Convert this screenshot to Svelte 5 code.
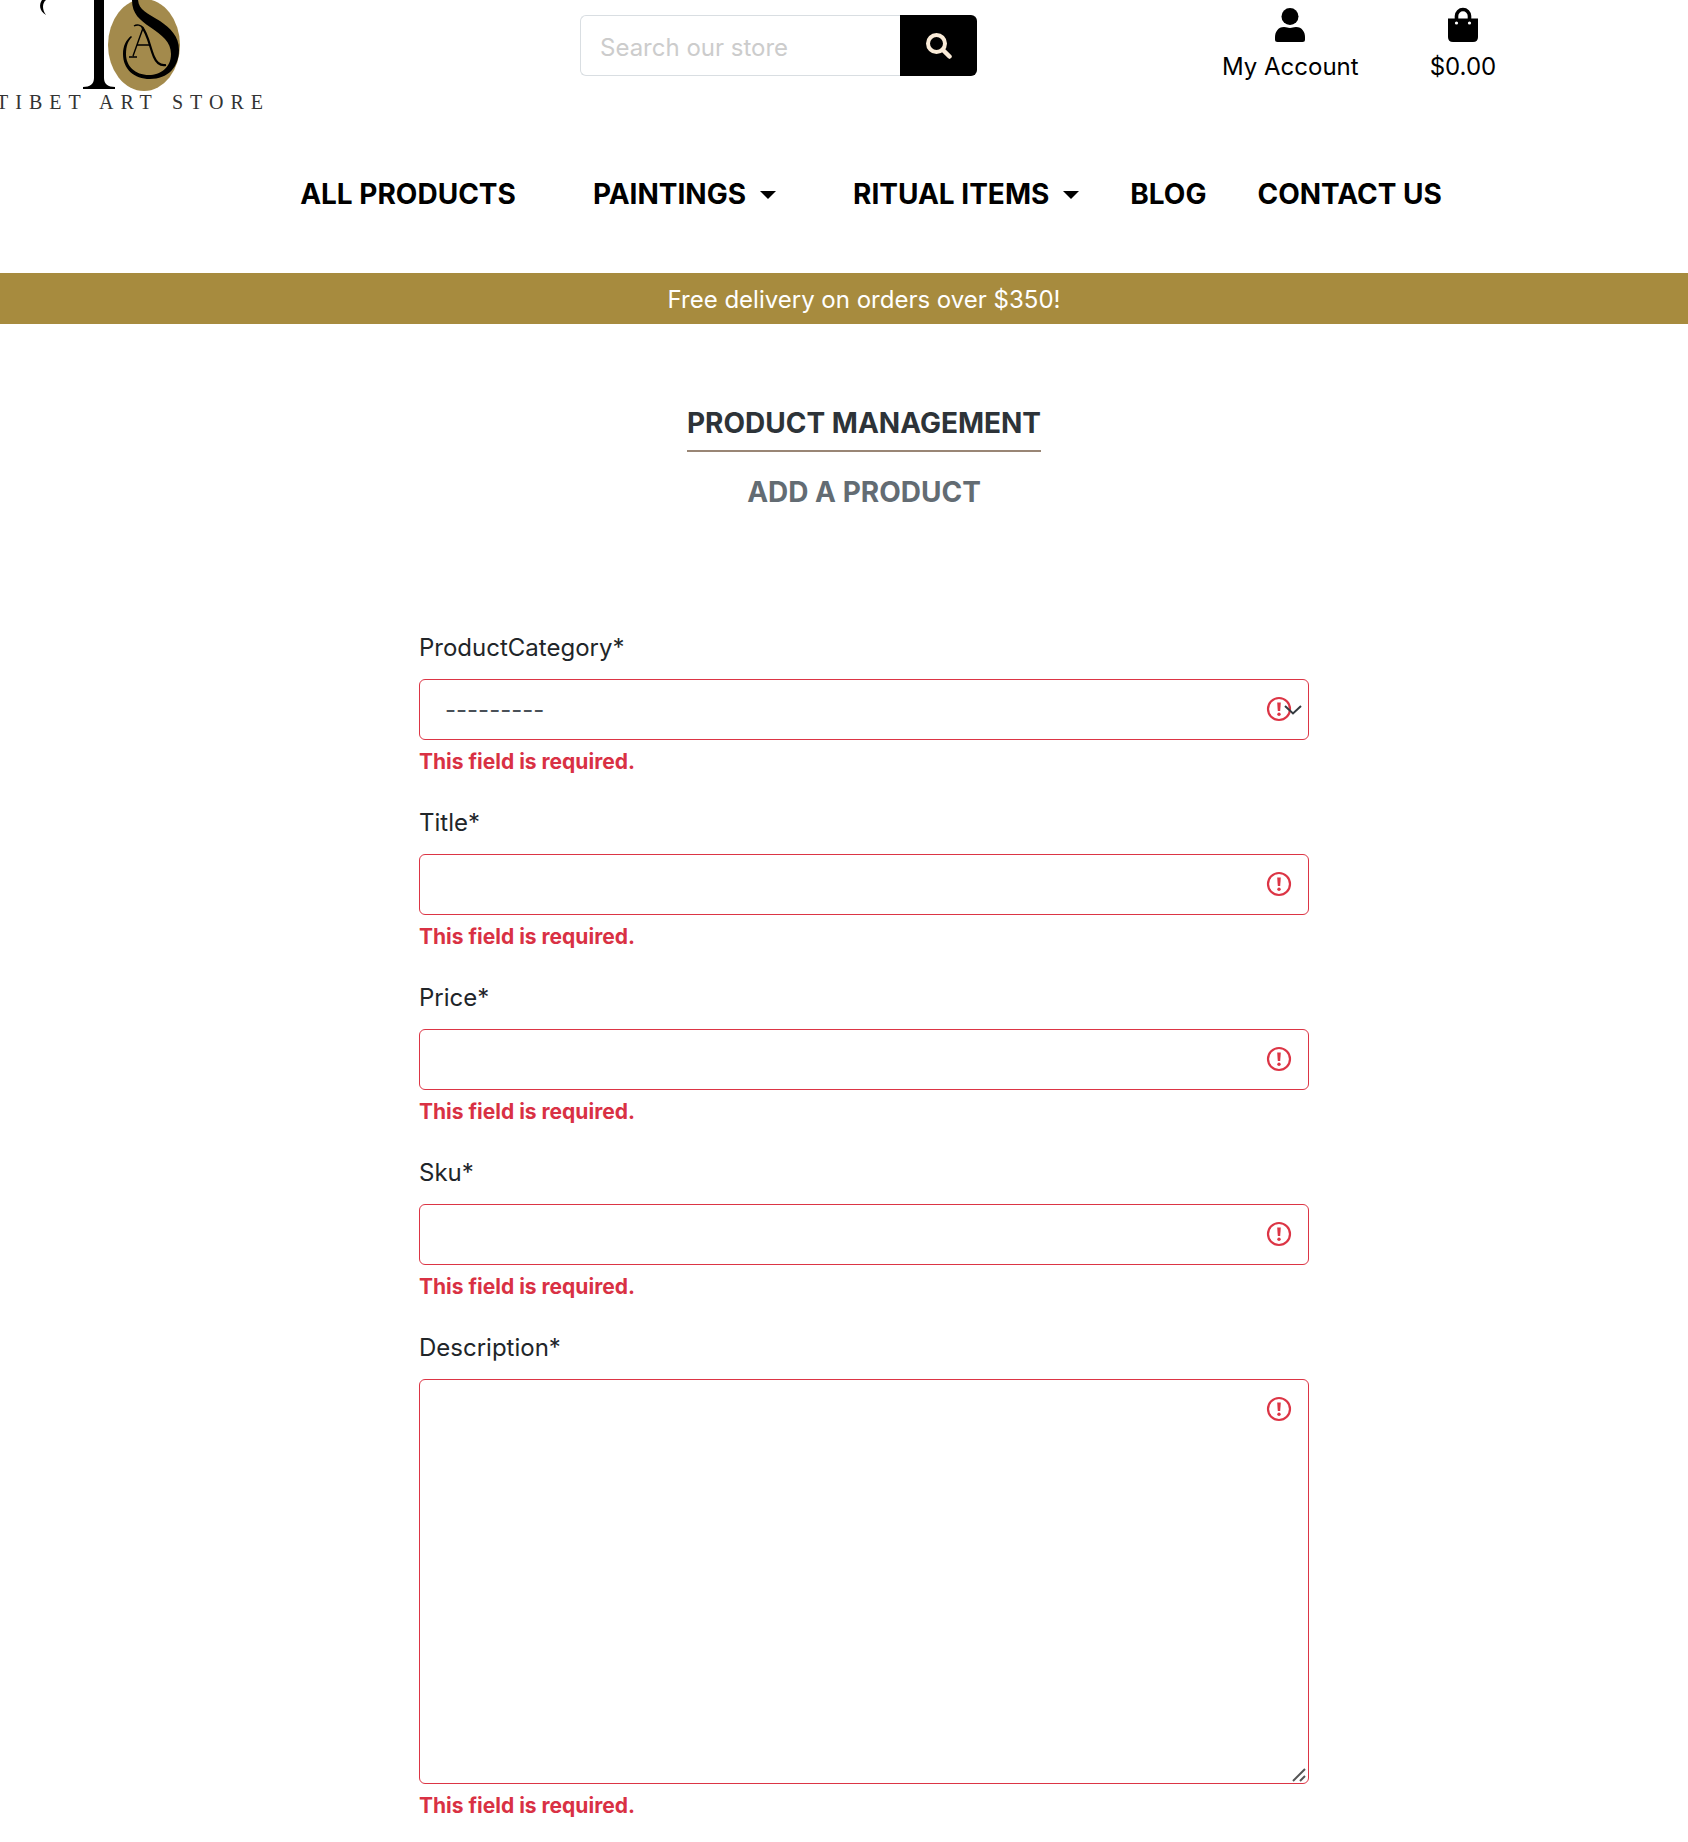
<script>
  const links = [
    { label: 'ALL PRODUCTS', menu: false, wide: true },
    { label: 'PAINTINGS', menu: true, wide: true },
    { label: 'RITUAL ITEMS', menu: true, wide: false },
    { label: 'BLOG', menu: false, wide: false },
    { label: 'CONTACT US', menu: false, wide: false }
  ];

  const fields = [
    { id: 'category', label: 'ProductCategory*', kind: 'select' },
    { id: 'title', label: 'Title*', kind: 'text' },
    { id: 'price', label: 'Price*', kind: 'text' },
    { id: 'sku', label: 'Sku*', kind: 'text' },
    { id: 'description', label: 'Description*', kind: 'area' }
  ];
</script>

<header>
  <div class="top">
    <a class="logo" href="/" aria-label="Tibet Art Store">
      <svg width="280" height="120" viewBox="0 0 280 120">
        <ellipse cx="144" cy="45" rx="36" ry="46" fill="#a38a4c" />
        <path d="M46 0C42 3 42 10 46 15C39 11 39 4 42 0Z" />
        <path d="M94 0H104V78C104 84 108 87 115 87V89H83V87C90 87 94 84 94 78Z" />
        <path d="M132 0C132 14 140 20 150 27C162 35 171 42 171 54C171 68 160 75 149 75C135 75 126 66 126 54C126 46 128 41 132 37L131 36C126 40 123 46 123 54C123 69 134 79 150 79C168 79 179 67 179 50C179 36 170 28 160 21C147 13 139 10 138 0Z" />
        <g fill="none" stroke="#000">
          <path d="M134 26C137 24 141 25 143 28L133 56M129 57H137M137 45H150" stroke-width="1.4" />
          <path d="M142 27C148 34 150 48 154 57C157 64 161 66 166 65" stroke-width="2.2" />
        </g>
        <g class="wordmark">
          <text x="-4" y="109">TIBET</text>
          <text x="99" y="109">ART</text>
          <text x="172" y="109">STORE</text>
        </g>
      </svg>
    </a>

    <form class="search" role="search">
      <input type="search" placeholder="Search our store" aria-label="Search our store" />
      <button type="button" aria-label="Search">
        <svg width="26" height="26" viewBox="0 0 26 26" fill="none" stroke="#faebd7">
          <circle cx="10.5" cy="10.5" r="8.5" stroke-width="4" />
          <path d="M17 17L23.500 23.500" stroke-width="4.500" stroke-linecap="round" />
        </svg>
      </button>
    </form>

    <div class="account">
      <a href="/account">
        <svg width="32" height="36" viewBox="0 0 32 36">
          <circle cx="16" cy="9.500" r="8.500" />
          <path d="M10 20C13 20 13.500 21 16 21S19 20 22 20C28 20 31 25 31 30V32.500Q31 35 28.500 35H3.500Q1 35 1 32.500V30C1 25 4 20 10 20Z" />
        </svg>
        <span>My Account</span>
      </a>
      <a href="/bag">
        <svg width="32" height="36" viewBox="0 0 32 36">
          <path d="M1 11.500H31V30Q31 35 26 35H6Q1 35 1 30Z" />
          <path d="M9.500 13V9A6.500 6.500 0 0 1 22.500 9V13" fill="none" stroke="#000" stroke-width="3.600" />
          <circle cx="9.500" cy="16" r="1.600" fill="#fff" />
          <circle cx="22.500" cy="16" r="1.600" fill="#fff" />
        </svg>
        <span>$0.00</span>
      </a>
    </div>
  </div>

  <nav>
    {#each links as link}
      <a href="/products" class:wide={link.wide}>
        {link.label}
        {#if link.menu}<span class="caret"></span>{/if}
      </a>
    {/each}
  </nav>
</header>

<div class="banner">Free delivery on orders over $350!</div>

<main>
  <h1>PRODUCT MANAGEMENT</h1>
  <h2>ADD A PRODUCT</h2>

  <form class="product" novalidate>
    {#each fields as field}
      <div class="field">
        <label for={field.id}>{field.label}</label>
        <div class="control">
          {#if field.kind === 'select'}
            <select id={field.id} aria-invalid="true">
              <option>---------</option>
            </select>
          {:else if field.kind === 'area'}
            <textarea id={field.id} aria-invalid="true"></textarea>
            <svg class="grip" width="14" height="14" viewBox="0 0 14 14">
              <path d="M1 13L13 1M8 13L13 8" stroke="#555" stroke-width="2" />
            </svg>
          {:else}
            <input id={field.id} type="text" aria-invalid="true" />
          {/if}
          <svg class="alert" width="26" height="26" viewBox="0 0 26 26">
            <circle cx="13" cy="13" r="11" fill="none" stroke="#dc3545" stroke-width="2.200" />
            <path d="M11.200 6.500H14.800L14.200 15H11.800Z" fill="#dc3545" />
            <circle cx="13" cy="18.200" r="1.700" fill="#dc3545" />
          </svg>
          {#if field.kind === 'select'}
            <svg class="chevron" width="18" height="10" viewBox="0 0 18 10">
              <path d="M1 1L9 8.500L17 1" fill="none" stroke="#343a40" stroke-width="2" />
            </svg>
          {/if}
        </div>
        <p>This field is required.</p>
      </div>
    {/each}
  </form>
</main>

<style>
  :global(body) {
    background: #fff;
    color: #212529;
    font-family: Inter, 'Liberation Sans', sans-serif;
    font-size: 24px;
    line-height: 39px;
    overflow-x: hidden;
  }

  a {
    color: #000;
    text-decoration: none;
  }

  .top {
    display: grid;
    grid-template-columns: minmax(0, 580fr) minmax(0, 397fr) minmax(0, 711fr);
    align-items: start;
    height: 120px;
  }

  .logo svg {
    display: block;
  }

  .wordmark {
    fill: #333;
    font-family: 'Liberation Serif', serif;
    font-size: 20px;
    letter-spacing: 7px;
  }

  .search {
    display: flex;
    height: 61px;
    margin-top: 15px;
  }

  .search input {
    flex: 1;
    min-width: 0;
    box-sizing: border-box;
    padding: 3px 19px 0;
    border: 1px solid #d9dee2;
    border-right: 0;
    border-radius: 6px 0 0 6px;
    background: #fff;
    font: inherit;
  }

  .search input::placeholder {
    color: #ccc;
  }

  .search button {
    display: flex;
    align-items: center;
    justify-content: center;
    width: 77px;
    padding: 0;
    border: 0;
    border-radius: 0 6px 6px 0;
    background: #000;
  }

  .account {
    display: flex;
    gap: 71px;
    padding: 7px 0 0 245px;
  }

  .account a {
    display: flex;
    flex-direction: column;
    align-items: center;
    gap: 4px;
    white-space: nowrap;
  }

  nav {
    display: flex;
    align-items: center;
    justify-content: center;
    gap: 51px;
    height: 153px;
    padding: 0 0 4px 54px;
    box-sizing: border-box;
    font-size: 28px;
    font-weight: 700;
    white-space: nowrap;
  }

  nav a {
    display: flex;
    align-items: center;
    gap: 14px;
  }

  nav .wide {
    margin-right: 26px;
  }

  .caret {
    border: 8px solid transparent;
    border-top-color: #000;
    border-bottom: 0;
  }

  .banner {
    padding: 7px 0 5px 40px;
    background: #a78b3e;
    color: #fff;
    text-align: center;
  }

  main {
    display: flex;
    flex-direction: column;
    align-items: center;
    padding: 79px 0 0 40px;
  }

  h1,
  h2 {
    margin: 0;
    font-size: 28px;
    line-height: 40px;
    font-weight: 700;
  }

  h1 {
    padding-bottom: 7px;
    border-bottom: 2px solid #998675;
    color: #2d3338;
  }

  h2 {
    margin-top: 20px;
    color: #636c73;
  }

  .product {
    width: 100%;
    max-width: 890px;
    margin-top: 116px;
  }

  .field {
    margin-bottom: 25px;
  }

  .field:last-child {
    margin-bottom: 0;
  }

  label {
    display: block;
    margin-bottom: 12px;
  }

  .control {
    position: relative;
  }

  .control input,
  select,
  textarea {
    display: block;
    width: 100%;
    height: 61px;
    box-sizing: border-box;
    padding: 0 25px;
    border: 1px solid #dc3545;
    border-radius: 6px;
    background: #fff;
    color: #495057;
    font: inherit;
    appearance: none;
  }

  textarea {
    height: 405px;
    padding: 10px 25px;
    resize: vertical;
  }

  textarea::-webkit-resizer {
    background: transparent;
  }

  .grip {
    position: absolute;
    right: 3px;
    bottom: 2px;
    pointer-events: none;
  }

  .alert {
    position: absolute;
    top: 17px;
    right: 17px;
    pointer-events: none;
  }

  .chevron {
    position: absolute;
    top: 26px;
    right: 7px;
    pointer-events: none;
  }

  p {
    margin: 6px 0 0;
    color: #d93144;
    font-size: 21px;
    line-height: 32px;
    font-weight: 700;
  }
</style>
